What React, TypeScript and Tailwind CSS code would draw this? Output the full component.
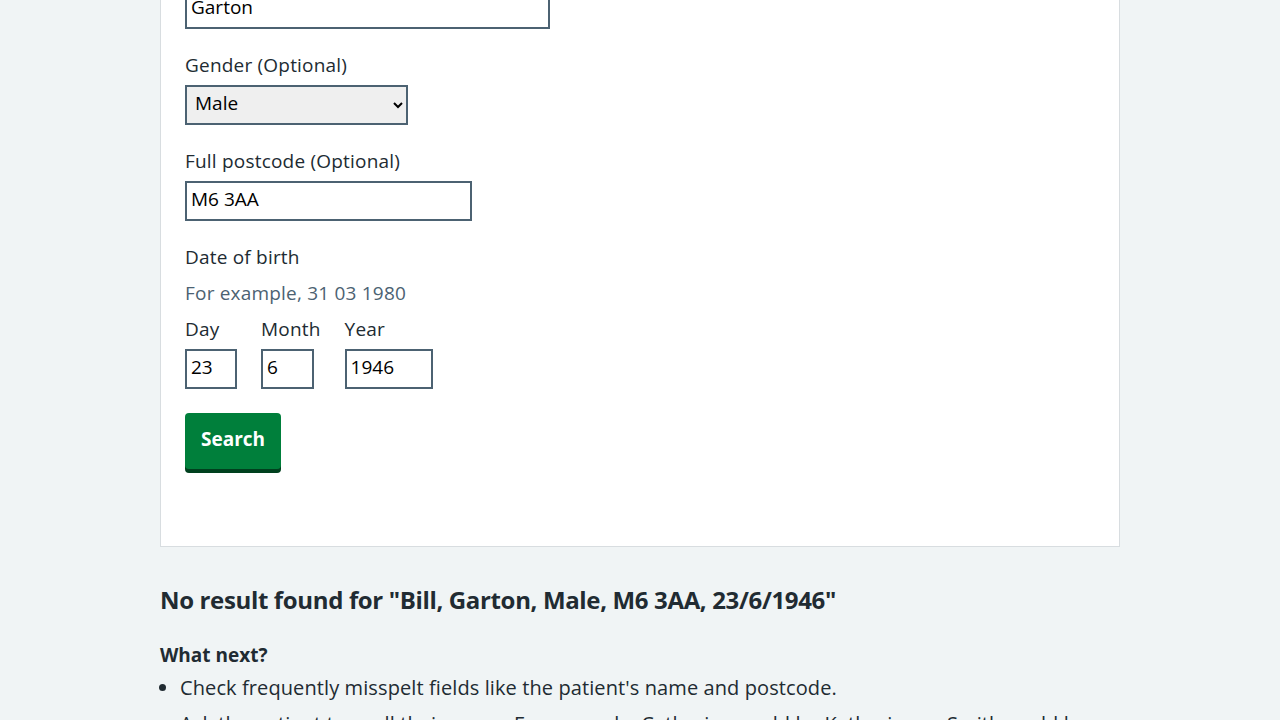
import React from 'react';

const font = { fontFamily: '"Open Sans", "Noto Sans", Arial, sans-serif' };

const Label = ({ children }: { children: React.ReactNode }) => (
  <label className="block text-[19px] leading-[24px] tracking-[0.2px] text-[#212b32] mb-2">{children}</label>
);

const inputCls = 'h-10 border-2 border-[#4c6272] bg-white px-1 pb-1 text-[19px] text-black outline-none';

const DateField = ({ label, value, width }: { label: string; value: string; width: string }) => (
  <div className="mr-6 flex flex-col">
    <Label>{label}</Label>
    <input readOnly value={value} className={`${width} ${inputCls}`} style={font} />
  </div>
);

export default function App() {
  return (
    <div className="min-h-screen bg-[#f0f4f5] text-[#212b32]" style={font}>
      <div className="mx-auto w-[960px]">
        {/* Search form card (page is scrolled, top sits above viewport) */}
        <div className="-mt-[68px] border border-[#d8dde0] bg-white px-6 pt-6 pb-[77px]">
          <div className="mb-6">
            <Label>Last name</Label>
            <input readOnly value="Garton" className={`w-[365px] ${inputCls}`} style={font} />
          </div>

          <div className="mb-6">
            <Label>Gender (Optional)</Label>
            <select
              defaultValue="Male"
              className="h-10 w-[223px] border-2 border-[#4c6272] bg-[#efefef] pl-1 pb-1 text-[19px] text-black"
              style={font}
            >
              <option>Male</option>
              <option>Female</option>
            </select>
          </div>

          <div className="mb-6">
            <Label>Full postcode (Optional)</Label>
            <input readOnly value="M6 3AA" className={`w-[287px] ${inputCls}`} style={font} />
          </div>

          <fieldset className="mb-6">
            <legend className="mb-3 text-[19px] leading-[24px] tracking-[0.2px]">Date of birth</legend>
            <div className="mb-3 text-[19px] leading-[24px] tracking-[0.2px] text-[#4c6272]">For example, 31 03 1980</div>
            <div className="flex">
              <DateField label="Day" value="23" width="w-[52px]" />
              <DateField label="Month" value="6" width="w-[53px]" />
              <DateField label="Year" value="1946" width="w-[88px]" />
            </div>
          </fieldset>

          <button
            className="rounded-[4px] bg-[#007f3b] px-4 pt-[12px] pb-[16px] text-[19px] leading-[28px] font-bold text-white shadow-[0_4px_0_#00401e]"
            style={font}
          >
            Search
          </button>
        </div>

        {/* Result */}
        <div className="pt-[37px]">
          <h3 className="text-[24px] leading-[32px] font-bold tracking-[-0.35px]">
            No result found for "Bill, Garton, Male, M6 3AA, 23/6/1946"
          </h3>
          <h4 className="mt-[25px] text-[19px] leading-[28px] font-bold">What next?</h4>
          <ul className="mt-[5px] list-disc pl-5 text-[20px] leading-[28px] tracking-[0.1px]">
            <li className="mb-2">Check frequently misspelt fields like the patient's name and postcode.</li>
            <li className="mb-2">Ask the patient to spell their name. For example, Catherine could be Katherine or Smith could be Smyth.</li>
          </ul>
        </div>
      </div>
    </div>
  );
}
